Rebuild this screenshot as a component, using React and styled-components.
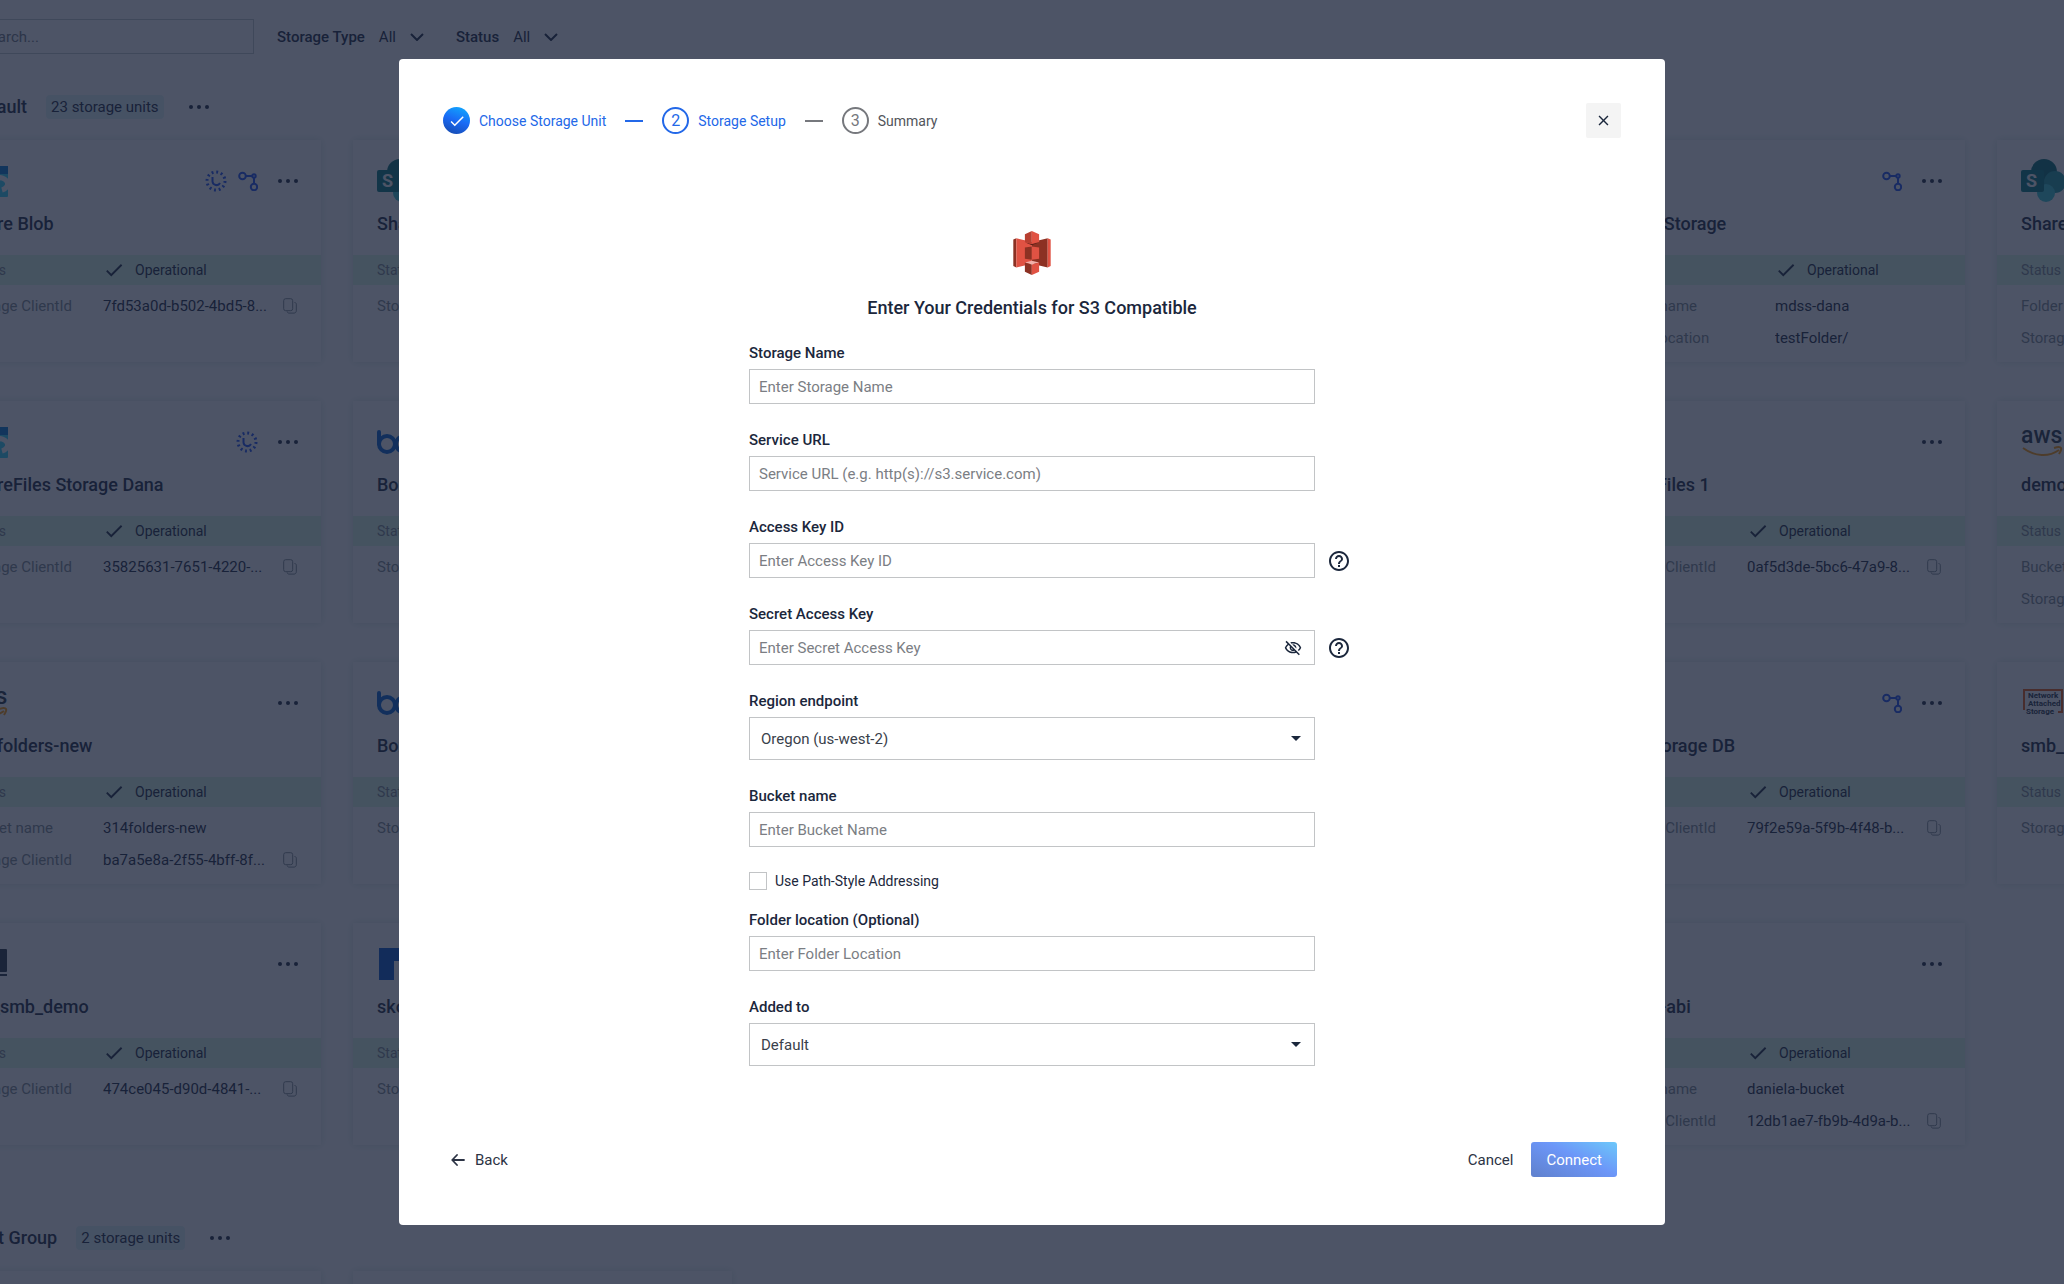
import React, { useState } from 'react';
import styled, { createGlobalStyle, css } from 'styled-components';
import { MdCheck, MdClose, MdHelpOutline, MdOutlineVisibilityOff, MdOutlineVisibility, MdArrowDropDown } from 'react-icons/md';

const cards = [
  { logo: 'azure', title: 'Azure Blob', icons: ['sync', 'flow'], rows: [['Storage ClientId', '7fd53a0d-b502-4bd5-8...', true]] },
  { logo: 'sharepoint', title: 'SharePoint', rows: [['Storage ClientId', '']] },
  null,
  null,
  { title: 'MDSS Storage', icons: ['flow'], wide: true, rows: [['Bucket name', 'mdss-dana'], ['Folder location', 'testFolder/']] },
  { logo: 'sharepoint', title: 'SharePoint', rows: [['Folder location', ''], ['Storage ClientId', '']] },

  { logo: 'azure', title: 'AzureFiles Storage Dana', icons: ['sync'], rows: [['Storage ClientId', '35825631-7651-4220-...', true]] },
  { logo: 'box', title: 'Box', rows: [['Storage ClientId', '']] },
  null,
  null,
  { title: 'AzureFiles 1', rows: [['Storage ClientId', '0af5d3de-5bc6-47a9-8...', true]] },
  { logo: 'aws', title: 'demo', rows: [['Bucket name', ''], ['Storage ClientId', '']] },

  { logo: 'aws', title: '314folders-new', rows: [['Bucket name', '314folders-new'], ['Storage ClientId', 'ba7a5e8a-2f55-4bff-8f...', true]] },
  { logo: 'box', title: 'Box', rows: [['Storage ClientId', '']] },
  null,
  null,
  { title: 'Box Storage DB', icons: ['flow'], rows: [['Storage ClientId', '79f2e59a-5f9b-4f48-b...', true]] },
  { logo: 'nas', title: 'smb_share', rows: [['Storage ClientId', '']] },

  { logo: 'smb', title: 'fs1_smb_demo', rows: [['Storage ClientId', '474ce045-d90d-4841-...', true]] },
  { logo: 'block', title: 'skodata', rows: [['Storage ClientId', '']] },
  null,
  null,
  { title: 'aws-D-abi', rows: [['Bucket name', 'daniela-bucket'], ['Storage ClientId', '12db1ae7-fb9b-4d9a-b...', true]] },
];

const Dots = () => (
  <svg width="20" height="6" viewBox="0 0 20 6" fill="currentColor">
    <circle cx="2" cy="3" r="2" />
    <circle cx="10" cy="3" r="2" />
    <circle cx="18" cy="3" r="2" />
  </svg>
);

const Chevron = () => (
  <svg width="14" height="8" viewBox="0 0 14 8" fill="none" stroke="currentColor" strokeWidth="2">
    <path d="M1 1l6 6 6-6" />
  </svg>
);

const SyncIcon = () => (
  <svg width="22" height="22" viewBox="0 0 22 22" fill="none" stroke="#1d4ff0" strokeWidth="2">
    <circle cx="11" cy="11" r="9" strokeDasharray="1.9 2.81" strokeWidth="3" />
    <path d="M7.500 7v4.500a4 4 0 0 0 7.500 1.500" />
  </svg>
);

const FlowIcon = () => (
  <svg width="20" height="20" viewBox="0 0 20 20" fill="none" stroke="#1d4ff0" strokeWidth="2">
    <circle cx="4.500" cy="5" r="3.300" />
    <circle cx="16" cy="16" r="3.200" />
    <circle cx="16" cy="5" r="1.700" />
    <path d="M8 5h6.500M16 7v6" />
  </svg>
);

const CopyIcon = () => (
  <svg width="14" height="16" viewBox="0 0 14 16" fill="none" stroke="currentColor">
    <rect x="0.700" y="0.700" width="9" height="12" rx="2" />
    <path d="M11.500 4.500c1 0 1.800.6 1.800 1.600v6.700c0 1.300-.9 2.300-2.200 2.300H6c-1 0-1.800-.7-1.800-1.700" />
  </svg>
);

const ArrowLeft = () => (
  <svg width="14" height="12" viewBox="0 0 14 12" fill="none" stroke="currentColor" strokeWidth="1.800" strokeLinecap="round" strokeLinejoin="round">
    <path d="M13 6H1.500M6 1L1.200 6 6 11" />
  </svg>
);

const S3Logo = () => (
  <svg width="38" height="44" viewBox="0 0 113 133">
    <path fill="#8c3123" d="M0 26l9-4v88l-9-4z" />
    <path fill="#e05243" d="M9 22l47 11v66L9 110z" />
    <path fill="#8c3123" d="M104 22L56 33v66l48 11z" />
    <path fill="#e05243" d="M104 22l9 4v80l-9 4z" />
    <path fill="#5e1f18" d="M35 34l21 5 22-5-22 9z" />
    <path fill="#b83f31" d="M35 10L56 0v39l-21-6z" />
    <path fill="#e05243" d="M56 0l22 10v23l-22 6z" />
    <path fill="#8c3123" d="M35 50l21-3v40l-21-3z" />
    <path fill="#e05243" d="M56 47l22 3v34l-22 3z" />
    <path fill="#f2b0a9" d="M35 95l21-5 22 5-22 6z" />
    <path fill="#8c3123" d="M35 95l21 6v32l-21-10z" />
    <path fill="#e05243" d="M56 101l22-6v28l-22 10z" />
  </svg>
);

const logos = {
  azure: (
    <svg width="42" height="42" viewBox="0 0 42 42">
      <rect y="6" width="42" height="31" rx="1" fill="#32d4f5" />
      <path d="M0 6h42v8H0z" fill="#0078d4" />
      <path d="M30 18a8 6 0 0 1 6 12" fill="none" stroke="#fff" strokeWidth="5" />
    </svg>
  ),
  sharepoint: (
    <svg width="48" height="44" viewBox="0 0 48 44">
      <circle cx="23" cy="13" r="13" fill="#036c70" />
      <circle cx="34" cy="23" r="11" fill="#1a9ba1" />
      <circle cx="25" cy="34" r="9" fill="#37c6d0" />
      <rect y="11" width="23" height="22" rx="2" fill="#03787c" />
      <text x="5" y="28" fontSize="18" fontWeight="700" fill="#fff">S</text>
    </svg>
  ),
  box: (
    <svg width="44" height="24" viewBox="0 0 44 24" fill="none" stroke="#0061d5" strokeWidth="4">
      <path d="M2 2v12" strokeLinecap="round" />
      <circle cx="10" cy="14" r="8" />
      <circle cx="27" cy="14" r="8" />
    </svg>
  ),
  aws: (
    <svg width="44" height="34" viewBox="0 0 44 34">
      <text x="0" y="18" fontSize="23" fontWeight="500" fill="#252f3e">aws</text>
      <path d="M2 23c12 9 26 9 36 2M33 23c3-1 6-2 7 0s-1 4-2 6" fill="none" stroke="#ff9900" strokeWidth="2" />
    </svg>
  ),
  nas: (
    <svg width="44" height="30" viewBox="0 0 44 30" fontSize="8" fontWeight="700" fill="#252f3e">
      <path d="M3 22V2h38v22h-4" fill="none" stroke="#e8590c" strokeWidth="2" />
      <text x="7" y="10">Network</text>
      <text x="7" y="18">Attached</text>
      <text x="5" y="26">Storage</text>
    </svg>
  ),
  smb: (
    <svg width="42" height="30" viewBox="0 0 42 30" fill="#252f3e">
      <rect width="41" height="23" rx="1" />
      <rect y="25" width="41" height="2" />
    </svg>
  ),
  block: (
    <svg width="40" height="32" viewBox="0 0 40 32">
      <rect x="2" width="38" height="32" fill="#0052cc" />
      <path d="M17 32V13h12v19z" fill="#fff" />
    </svg>
  ),
};

function StorageCard({ card }) {
  if (!card) return <CardBox />;

  return (
    <CardBox>
      <CardTop>
        <Logo>{logos[card.logo]}</Logo>
        {card.icons && (
          <StateIcons>
            {card.icons.map(icon => icon === 'sync' ? <SyncIcon key={icon} /> : <FlowIcon key={icon} />)}
          </StateIcons>
        )}
        <IconButton aria-label="Storage menu"><Dots /></IconButton>
      </CardTop>
      <CardTitle>{card.title}</CardTitle>
      <StatusBand $wide={card.wide}>
        <span>Status</span>
        <Operational><MdCheck size={22} />Operational</Operational>
      </StatusBand>
      {card.rows.map(([label, value, copy]) => (
        <CardRow key={label} $wide={card.wide}>
          <span>{label}</span>
          <Value>{value}</Value>
          {copy && <CopyIcon />}
        </CardRow>
      ))}
    </CardBox>
  );
}

function TextField({ id, label, help, secret, ...rest }) {
  const [hidden, setHidden] = useState(true);

  return (
    <Field>
      <Label htmlFor={id}>{label}</Label>
      <FieldRow>
        <InputBox>
          <Input id={id} type={secret && hidden ? 'password' : 'text'} {...rest} />
          {secret && (
            <IconButton type="button" aria-label="Show key" onClick={() => setHidden(!hidden)}>
              {hidden ? <MdOutlineVisibilityOff size={18} /> : <MdOutlineVisibility size={18} />}
            </IconButton>
          )}
        </InputBox>
        {help && <HelpButton type="button" aria-label="Help"><MdHelpOutline size={24} /></HelpButton>}
      </FieldRow>
    </Field>
  );
}

function SelectField({ id, label, option }) {
  return (
    <Field>
      <Label htmlFor={id}>{label}</Label>
      <SelectBox>
        <Select id={id}>
          <option>{option}</option>
        </Select>
        <MdArrowDropDown size={24} />
      </SelectBox>
    </Field>
  );
}

export default function App() {
  const [pathStyle, setPathStyle] = useState(false);

  return (
    <Screen>
      <GlobalStyle />
      <Page>
        <Toolbar>
          <Search type="search" aria-label="Search" placeholder="Search..." />
          <Filter><b>Storage Type</b>All<Chevron /></Filter>
          <Filter><b>Status</b>All<Chevron /></Filter>
        </Toolbar>
        <GroupHeader>
          <h2>Default</h2>
          <Badge>23 storage units</Badge>
          <IconButton aria-label="Group menu"><Dots /></IconButton>
        </GroupHeader>
        <Cards>
          {cards.map((card, i) => <StorageCard key={i} card={card} />)}
        </Cards>
        <GroupHeader>
          <h2>Test Group</h2>
          <Badge>2 storage units</Badge>
          <IconButton aria-label="Group menu"><Dots /></IconButton>
        </GroupHeader>
        <Cards>
          <StorageCard />
          <StorageCard />
        </Cards>
      </Page>

      <Overlay>
        <Modal role="dialog" aria-modal="true" aria-labelledby="modal-title">
          <ModalHeader>
            <Steps>
              <Step $state="done"><i><MdCheck size={18} /></i>Choose Storage Unit</Step>
              <Dash $active />
              <Step $state="active"><i>2</i>Storage Setup</Step>
              <Dash />
              <Step><i>3</i>Summary</Step>
            </Steps>
            <CloseButton aria-label="Close"><MdClose size={17} /></CloseButton>
          </ModalHeader>

          <Form onSubmit={e => e.preventDefault()}>
            <Intro>
              <S3Logo />
              <h1 id="modal-title">Enter Your Credentials for S3 Compatible</h1>
            </Intro>
            <TextField id="name" label="Storage Name" placeholder="Enter Storage Name" />
            <TextField id="url" label="Service URL" placeholder="Service URL (e.g. http(s)://s3.service.com)" />
            <TextField id="access" label="Access Key ID" placeholder="Enter Access Key ID" help />
            <TextField id="secret" label="Secret Access Key" placeholder="Enter Secret Access Key" help secret />
            <SelectField id="region" label="Region endpoint" option="Oregon (us-west-2)" />
            <TextField id="bucket" label="Bucket name" placeholder="Enter Bucket Name" />
            <CheckLabel>
              <input type="checkbox" checked={pathStyle} onChange={e => setPathStyle(e.target.checked)} />
              Use Path-Style Addressing
            </CheckLabel>
            <TextField id="folder" label="Folder location (Optional)" placeholder="Enter Folder Location" />
            <SelectField id="group" label="Added to" option="Default" />
          </Form>

          <ModalFooter>
            <TextButton><ArrowLeft />Back</TextButton>
            <Actions>
              <TextButton>Cancel</TextButton>
              <ConnectButton disabled>Connect</ConnectButton>
            </Actions>
          </ModalFooter>
        </Modal>
      </Overlay>
    </Screen>
  );
}

const GlobalStyle = createGlobalStyle`
  * {
    box-sizing: border-box;
  }

  body {
    margin: 0;
    font-family: Roboto, "Liberation Sans", sans-serif;
    font-size: 15px;
    line-height: 20px;
    color: #1b273c;
  }

  button, input, select {
    font: inherit;
    color: inherit;
  }

  h1, h2, h3 {
    margin: 0;
    font-size: 18px;
    line-height: 24px;
    font-weight: 500;
  }

  svg {
    display: block;
    flex: none;
  }
`

const Screen = styled.div`
  position: relative;
  height: 100vh;
  overflow: hidden;
  background-color: #fff;
`

/* the list is scrolled a little to the right behind the dialog */
const Page = styled.div`
  width: calc(100% + 370px);
  margin-left: -58px;
  padding-top: 19px;
`

const Toolbar = styled.div`
  display: flex;
  align-items: center;
  padding-left: 24px;
`

const Search = styled.input`
  width: 288px;
  height: 35px;
  margin-right: 23px;
  padding: 0 14px;
  border: 1px solid #c4c9cc;
  background: none;

  &::placeholder {
    color: #707880;
  }
`

const Filter = styled.div`
  display: flex;
  align-items: center;
  gap: 14px;
  margin-right: 32px;

  b {
    font-weight: 500;
  }
`

const GroupHeader = styled.div`
  display: flex;
  align-items: center;
  margin: 41px 0 21px 27px;
`

const Badge = styled.span`
  margin: 0 25px 0 19px;
  padding: 2px 5px;
  border-radius: 4px;
  background-color: #e2f4f4;
`

const Cards = styled.div`
  display: grid;
  grid-template-columns: repeat(6, minmax(0, 1fr));
  column-gap: 32px;
  row-gap: 39px;

  & + ${GroupHeader} {
    margin-top: 81px;
  }
`

const CardBox = styled.div`
  min-height: 222px;
  padding-top: 20px;
  box-shadow: 0 0 8px rgba(60, 130, 120, .22);
`

const CardTop = styled.div`
  display: flex;
  align-items: center;
  height: 42px;
  padding: 0 23px 0 24px;
`

const Logo = styled.div`
  flex: 1;
`

const StateIcons = styled.div`
  display: flex;
  align-items: center;
  gap: 11px;
  margin-right: 20px;
`

const IconButton = styled.button`
  padding: 0;
  border: none;
  background: none;
  cursor: pointer;
`

const CardTitle = styled.h3`
  margin: 10px 24px 19px;
`

const CardRow = styled.div`
  display: grid;
  grid-template-columns: ${({ $wide }) => $wide ? '165px' : '137px'} minmax(0, 168px) 14px;
  justify-content: start;
  align-items: center;
  height: 32px;
  padding: 0 24px;
  color: #7f8a90;

  svg {
    margin-left: 12px;
  }
`

const StatusBand = styled(CardRow)`
  height: 30px;
  margin-bottom: 5px;
  background-color: #dcf9e4;
  font-size: 14px;
`

const Operational = styled.span`
  display: flex;
  align-items: center;
  gap: 10px;
  color: #1b273c;

  svg {
    margin: 0;
  }
`

const Value = styled.span`
  overflow: hidden;
  white-space: nowrap;
  text-overflow: ellipsis;
  color: #1b273c;
`

const Overlay = styled.div`
  position: absolute;
  inset: 0;
  display: flex;
  align-items: center;
  justify-content: center;
  background-color: rgba(24, 32, 56, .77);
`

const Modal = styled.section`
  width: 92%;
  max-width: 1266px;
  border-radius: 4px;
  background-color: #fff;
`

const ModalHeader = styled.header`
  display: flex;
  align-items: center;
  justify-content: space-between;
  padding: 44px 44px 0;
`

const Steps = styled.div`
  display: flex;
  align-items: center;
  gap: 19px;
  font-size: 14px;
`

const Step = styled.div`
  display: flex;
  align-items: center;
  gap: 9px;
  color: #51545a;

  i {
    display: flex;
    align-items: center;
    justify-content: center;
    width: 27px;
    height: 27px;
    border: 2px solid #76787d;
    border-radius: 50%;
    font-style: normal;
    font-size: 16px;
    color: #76787d;
  }

  ${({ $state }) => $state && css`
    color: #2368e8;

    i {
      border-color: #2368e8;
      color: #2368e8;
    }
  `}

  ${({ $state }) => $state === 'done' && css`
    i {
      border: none;
      background: linear-gradient(200deg, #0fb0ff, #1a6af5 50%, #1647a8);
      color: #fff;
    }
  `}
`

const Dash = styled.span`
  width: 18px;
  height: 2px;
  background-color: ${({ $active }) => $active ? '#2368e8' : '#76787d'};
`

const CloseButton = styled.button`
  display: flex;
  align-items: center;
  justify-content: center;
  width: 35px;
  height: 35px;
  padding: 0;
  border: none;
  border-radius: 2px;
  background-color: #f4f4f4;
  cursor: pointer;
`

const Form = styled.form`
  width: 566px;
  max-width: 80%;
  margin: 93px auto 76px;
`

const Intro = styled.div`
  display: flex;
  flex-direction: column;
  align-items: center;
  gap: 21px;
  margin-bottom: 23px;
`

const Field = styled.div`
  & + & {
    margin-top: 26px;
  }
`

const Label = styled.label`
  display: block;
  margin-bottom: 6px;
  font-weight: 500;
`

const FieldRow = styled.div`
  display: flex;
  align-items: center;
`

const InputBox = styled.div`
  display: flex;
  flex: 1;
  align-items: center;
  height: 35px;
  padding-right: 12px;
  border: 1px solid #c2c4c6;
`

const Input = styled.input`
  flex: 1;
  min-width: 0;
  height: 33px;
  padding: 0 9px;
  border: none;
  outline: none;
  background: none;

  &::placeholder {
    color: #7b7e84;
    opacity: 1;
  }
`

/* hangs in the margin so that every input keeps the same width */
const HelpButton = styled(IconButton)`
  margin: 0 -36px 0 12px;
`

const SelectBox = styled.div`
  position: relative;

  svg {
    position: absolute;
    top: 9px;
    right: 7px;
    pointer-events: none;
  }
`

const Select = styled.select`
  display: block;
  width: 100%;
  height: 43px;
  padding: 0 11px;
  border: 1px solid #c2c4c6;
  border-radius: 0;
  background: none;
  appearance: none;
  color: #3a3f4b;
`

const CheckLabel = styled.label`
  display: flex;
  align-items: center;
  gap: 8px;
  height: 18px;
  margin: 25px 0 20px;
  font-size: 14px;

  input {
    width: 18px;
    height: 18px;
    margin: 0;
    border: 1px solid #c2c4c6;
    appearance: none;

    &:checked {
      background-color: #2368e8;
    }
  }
`

const ModalFooter = styled.footer`
  display: flex;
  align-items: center;
  justify-content: space-between;
  padding: 0 48px 48px 52px;
`

const Actions = styled.div`
  display: flex;
  gap: 18px;
`

const TextButton = styled.button`
  display: flex;
  align-items: center;
  gap: 10px;
  padding: 0;
  border: none;
  background: none;
  color: #2c3344;
  cursor: pointer;
`

const ConnectButton = styled.button`
  height: 35px;
  padding: 0 15px;
  border: none;
  border-radius: 3px;
  background: linear-gradient(25deg, #5f80cc, #6c96f8 55%, #6cc8fa);
  color: #fff;
`
